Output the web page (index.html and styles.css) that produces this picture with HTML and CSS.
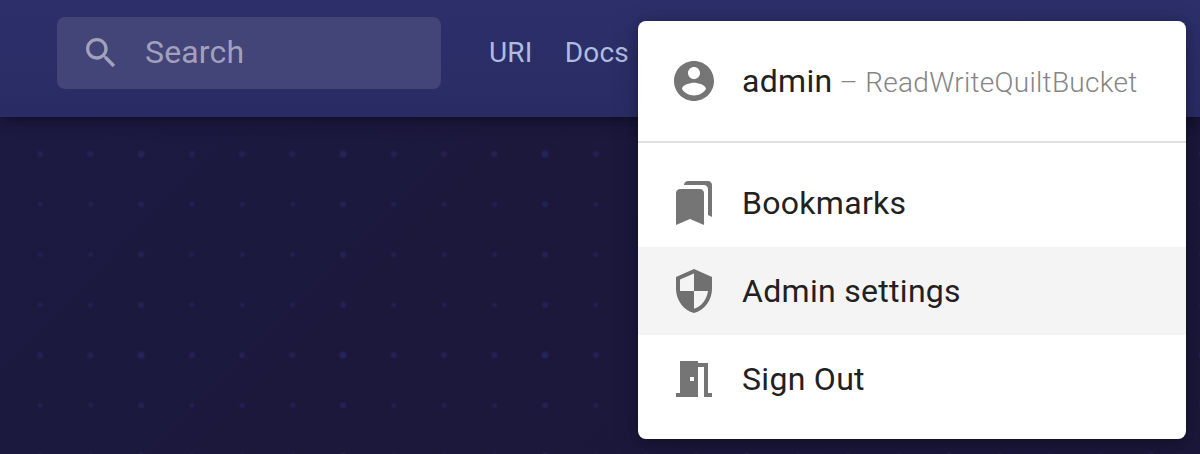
FILE: index.html
```html
<!DOCTYPE html>
<html lang="en">
<head>
<meta charset="utf-8">
<title>Quilt</title>
<link rel="stylesheet" href="styles.css">
</head>
<body>
<div class="page">
  <header class="bar">
    <div class="search">
      <svg class="search-icon" viewBox="0 0 24 24"><path d="M15.5 14h-.79l-.28-.27C15.41 12.59 16 11.11 16 9.5 16 5.91 13.09 3 9.5 3S3 5.91 3 9.5 5.91 16 9.5 16c1.61 0 3.09-.59 4.23-1.57l.27.28v.79l5 4.99L20.49 19l-4.99-5zm-6 0C7.01 14 5 11.99 5 9.5S7.01 5 9.5 5 14 7.01 14 9.5 11.99 14 9.5 14z"/></svg>
      <span class="placeholder">Search</span>
    </div>
    <nav class="links"><a>URI</a><a>Docs</a></nav>
  </header>
  <main class="content"></main>
  <div class="menu">
    <div class="item">
      <svg class="icon" viewBox="0 0 24 24"><path d="M12 2C6.48 2 2 6.48 2 12s4.48 10 10 10 10-4.480 10-10S17.520 2 12 2zm0 3c1.660 0 3 1.340 3 3s-1.340 3-3 3-3-1.340-3-3 1.340-3 3-3zm0 14.200c-2.500 0-4.710-1.280-6-3.220.030-1.990 4-3.080 6-3.080 1.990 0 5.970 1.090 6 3.080-1.290 1.940-3.500 3.220-6 3.220z"/></svg>
      <span class="user">admin<span class="role"> – ReadWriteQuiltBucket</span></span>
    </div>
    <hr class="divider">
    <div class="item">
      <svg class="icon" viewBox="0 0 24 24"><path d="M19 18l2 1V3c0-1.100-.9-2-2-2H8.990C7.890 1 7 1.900 7 3h10c1.100 0 2 .9 2 2v13zM15 5H5c-1.100 0-2 .9-2 2v16l7-3 7 3V7c0-1.100-.9-2-2-2z"/></svg>
      <span>Bookmarks</span>
    </div>
    <div class="item selected">
      <svg class="icon" viewBox="0 0 24 24"><path d="M12 1L3 5v6c0 5.550 3.840 10.740 9 12 5.160-1.260 9-6.450 9-12V5l-9-4zm0 10.990h7c-.53 4.120-3.280 7.790-7 8.940V12H5V6.300l7-3.110v8.800z"/></svg>
      <span>Admin settings</span>
    </div>
    <div class="item">
      <svg class="icon" viewBox="0 0 24 24"><path d="M14 6v15H3v-2h2V3h9v1h5v15h2v2h-4V6h-3zm-4 5v2h2v-2h-2z"/></svg>
      <span>Sign Out</span>
    </div>
  </div>
</div>
</body>
</html>
```
FILE: styles.css
```css
body {
  margin: 0;
  font-family: Roboto, "Liberation Sans", sans-serif;
}
.page {
  position: relative;
  display: flex;
  flex-direction: column;
  height: 454px;
  overflow: hidden;
}
.bar {
  display: flex;
  align-items: flex-start;
  gap: 48px;
  box-sizing: border-box;
  height: 117px;
  padding: 17px 0 0 57px;
  background: linear-gradient(#2d2f6b, #292c64);
  box-shadow: 0 4px 8px -2px rgba(0, 0, 0, 0.2), 0 8px 10px rgba(0, 0, 0, 0.1), 0 2px 20px rgba(0, 0, 0, 0.1);
  z-index: 1;
}
.search {
  display: flex;
  align-items: center;
  gap: 24px;
  box-sizing: border-box;
  width: 384px;
  height: 72px;
  padding: 0 24px;
  border-radius: 8px;
  background: #434477;
  color: #a1a1bb;
  font-size: 32px;
  line-height: 38px;
  letter-spacing: 0.15px;
}
.search-icon {
  width: 40px;
  height: 40px;
  fill: currentColor;
}
.placeholder {
  padding-bottom: 2px;
}
.links {
  display: flex;
  gap: 32px;
  box-sizing: border-box;
  height: 72px;
  padding-bottom: 2px;
  align-items: center;
  color: #b0bcdf;
  font-size: 28px;
  letter-spacing: 0.2px;
}
.content {
  flex: 1;
  background:
    radial-gradient(circle at 40px 37px, #242053 1.5px, transparent 4px) 0 0 / 202px 201px,
    radial-gradient(circle at 90px 37px, #242053 1.5px, transparent 4px) 0 0 / 202px 201px,
    radial-gradient(circle at 141px 37px, #26225a 2px, transparent 4.5px) 0 0 / 202px 201px,
    radial-gradient(circle at 192px 37px, #242053 1.5px, transparent 4px) 0 0 / 202px 201px,
    radial-gradient(circle at 141px 50%, #252156 1px, transparent 4px) 0 12px / 202px 50.25px,
    radial-gradient(circle, #242053 1px, transparent 3.5px) 15px 12px / 50.5px 50.25px,
    linear-gradient(135deg, #1d1a42, #1b183c 40%, #1a173a);
}
.menu {
  position: absolute;
  top: 21px;
  left: 638px;
  box-sizing: border-box;
  width: 548px;
  height: 418px;
  padding: 16px 0;
  border-radius: 8px;
  background: #fff;
  color: #212121;
  box-shadow: 0 2px 10px rgba(0, 0, 0, 0.2), 0 4px 28px rgba(0, 0, 0, 0.2);
  z-index: 2;
}
.item {
  display: flex;
  align-items: center;
  gap: 24px;
  box-sizing: border-box;
  height: 88px;
  padding: 0 32px;
  font-size: 32px;
  line-height: 48px;
  letter-spacing: 0.3px;
  white-space: nowrap;
}
.selected {
  background: #f4f4f4;
}
.icon {
  width: 48px;
  height: 48px;
  fill: #757575;
}
.selected .icon {
  fill: #707070;
}
.user {
  padding-top: 2px;
}
.role {
  color: #858585;
  font-size: 28px;
  font-weight: 300;
  letter-spacing: 0.28px;
}
.divider {
  height: 2px;
  margin: 16px 0;
  border: 0;
  background: #e0e0e0;
}
```
